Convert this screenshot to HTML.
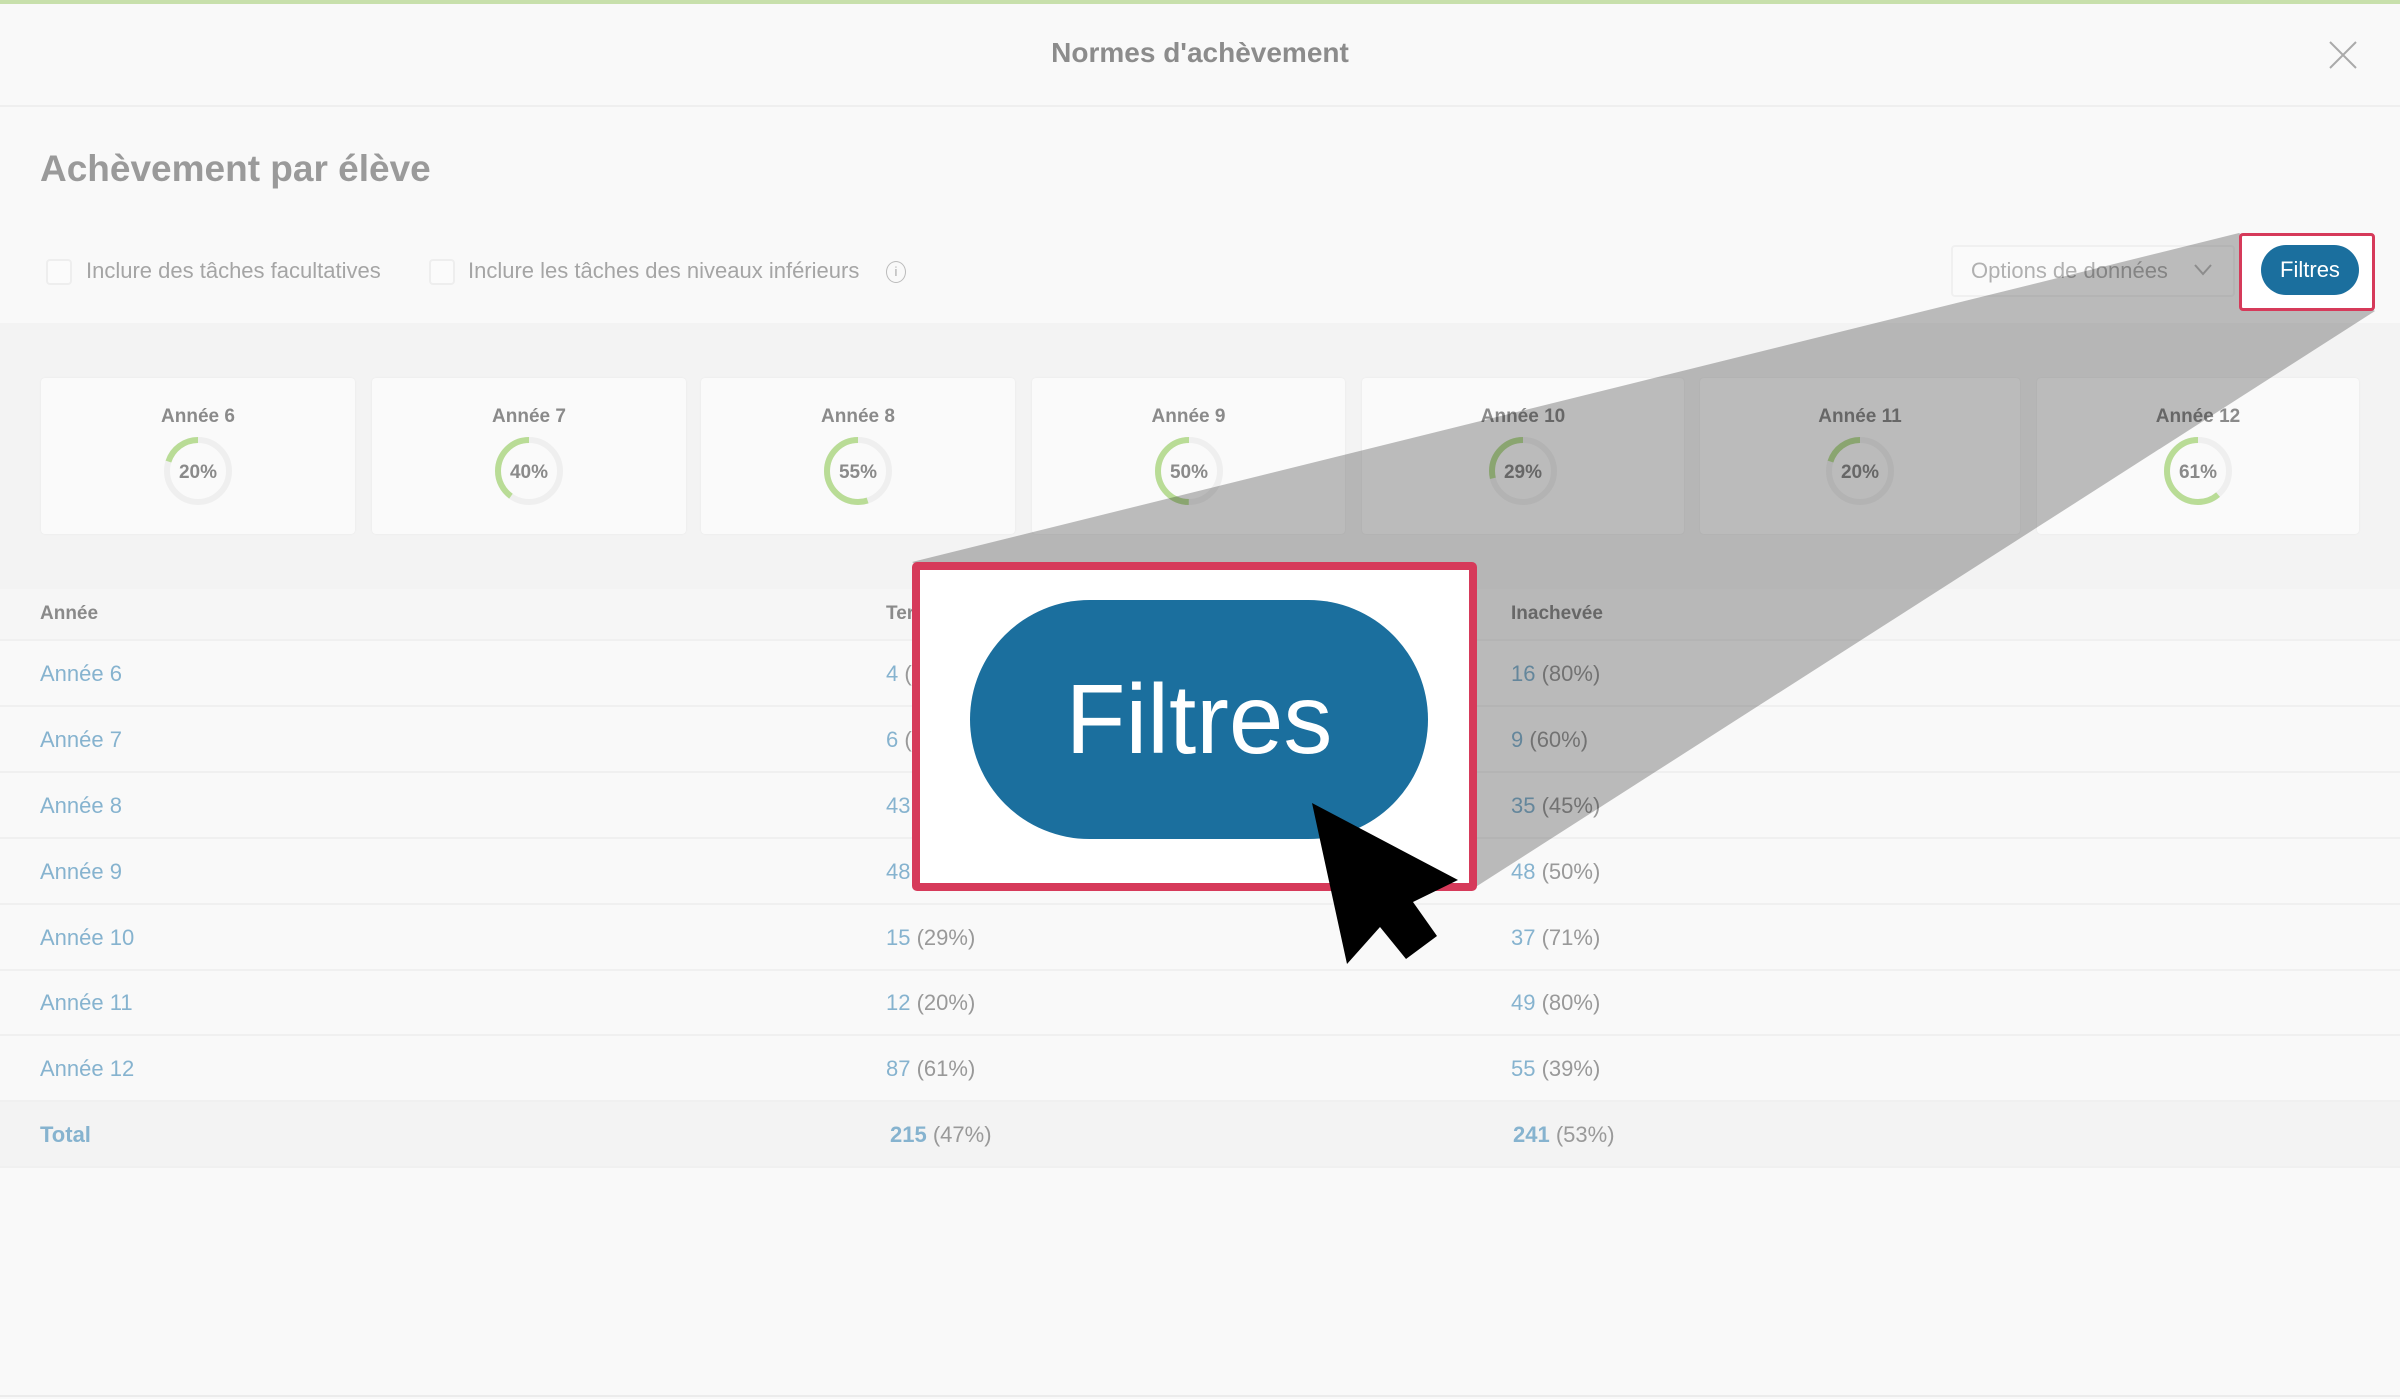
<!DOCTYPE html>
<html><head><meta charset="utf-8"><style>
*{margin:0;padding:0;box-sizing:border-box}
body{width:2400px;height:1399px;background:#f9f9f9;font-family:"Liberation Sans",sans-serif;position:relative;overflow:hidden}
.a{position:absolute;white-space:nowrap}
.card{position:absolute;top:378px;height:156px;background:#fafafa;border-radius:4px;box-shadow:0 0 2px rgba(0,0,0,.05)}
.card .l{position:absolute;top:28px;width:100%;text-align:center;font-size:19px;font-weight:bold;color:#8a8a8a}
.card svg{position:absolute;left:50%;top:55px;margin-left:-38px}
.row{position:absolute;left:0;width:2400px;height:66px;border-bottom:2px solid #f0f0f0}
.row span{position:absolute;top:20px;font-size:22px;color:#999}
.row span.lk,.row .lk{color:#86b3cf}
</style></head><body>
<div class="a" style="left:0;top:0;width:2400px;height:4px;background:#c8e0ac"></div>
<div class="a" style="left:0;top:105px;width:2400px;height:2px;background:#efefef"></div>
<div class="a" style="left:0;top:37px;width:2400px;text-align:center;font-size:28px;font-weight:bold;color:#8c8c8c">Normes d'achèvement</div>
<svg class="a" style="left:2329px;top:41px" width="28" height="28"><path d="M1 1L27 27M27 1L1 27" stroke="#aaa" stroke-width="2"/></svg>
<div class="a" style="left:40px;top:148px;font-size:37px;font-weight:bold;color:#9a9a9a">Achèvement par élève</div>
<div class="a" style="left:46px;top:259px;width:26px;height:26px;border:2px solid #eee;border-radius:4px;background:#fbfbfb"></div>
<div class="a" style="left:86px;top:258px;font-size:22px;color:#a5a5a5">Inclure des tâches facultatives</div>
<div class="a" style="left:429px;top:259px;width:26px;height:26px;border:2px solid #eee;border-radius:4px;background:#fbfbfb"></div>
<div class="a" style="left:468px;top:258px;font-size:22px;color:#a5a5a5">Inclure les tâches des niveaux inférieurs</div>
<div class="a" style="left:886px;top:261px;width:20px;height:22px;border:1.5px solid #bbb;border-radius:50%;font-size:13px;color:#aaa;text-align:center;line-height:19px">i</div>
<div class="a" style="left:1951px;top:245px;width:284px;height:52px;border:2px solid #f0f0f0;border-radius:4px;background:#fafafa"></div>
<div class="a" style="left:1971px;top:258px;font-size:22px;color:#b0b0b0">Options de données</div>
<svg class="a" style="left:2194px;top:264px" width="18" height="12"><path d="M1 1L9 10L17 1" stroke="#bbb" stroke-width="2" fill="none"/></svg>
<div class="a" style="left:0;top:323px;width:2400px;height:266px;background:#f3f3f3"></div>

<div class="card" style="left:41px;width:314px"><div class="l">Année 6</div><svg width="76" height="76"><circle cx="38" cy="38" r="31" stroke="#efefef" stroke-width="6" fill="none"/><circle cx="38" cy="38" r="31" stroke="#b9dc96" stroke-width="6" fill="none" stroke-dasharray="39 200" transform="translate(76 0) scale(-1 1) rotate(-90 38 38)"/><text x="38" y="45" text-anchor="middle" font-size="19" font-weight="bold" fill="#8a8a8a" font-family="Liberation Sans">20%</text></svg></div>
<div class="card" style="left:372px;width:314px"><div class="l">Année 7</div><svg width="76" height="76"><circle cx="38" cy="38" r="31" stroke="#efefef" stroke-width="6" fill="none"/><circle cx="38" cy="38" r="31" stroke="#b9dc96" stroke-width="6" fill="none" stroke-dasharray="78 200" transform="translate(76 0) scale(-1 1) rotate(-90 38 38)"/><text x="38" y="45" text-anchor="middle" font-size="19" font-weight="bold" fill="#8a8a8a" font-family="Liberation Sans">40%</text></svg></div>
<div class="card" style="left:701px;width:314px"><div class="l">Année 8</div><svg width="76" height="76"><circle cx="38" cy="38" r="31" stroke="#efefef" stroke-width="6" fill="none"/><circle cx="38" cy="38" r="31" stroke="#b9dc96" stroke-width="6" fill="none" stroke-dasharray="107 200" transform="translate(76 0) scale(-1 1) rotate(-90 38 38)"/><text x="38" y="45" text-anchor="middle" font-size="19" font-weight="bold" fill="#8a8a8a" font-family="Liberation Sans">55%</text></svg></div>
<div class="card" style="left:1032px;width:313px"><div class="l">Année 9</div><svg width="76" height="76"><circle cx="38" cy="38" r="31" stroke="#efefef" stroke-width="6" fill="none"/><circle cx="38" cy="38" r="31" stroke="#b9dc96" stroke-width="6" fill="none" stroke-dasharray="97 200" transform="translate(76 0) scale(-1 1) rotate(-90 38 38)"/><text x="38" y="45" text-anchor="middle" font-size="19" font-weight="bold" fill="#8a8a8a" font-family="Liberation Sans">50%</text></svg></div>
<div class="card" style="left:1362px;width:322px"><div class="l">Année 10</div><svg width="76" height="76"><circle cx="38" cy="38" r="31" stroke="#efefef" stroke-width="6" fill="none"/><circle cx="38" cy="38" r="31" stroke="#b9dc96" stroke-width="6" fill="none" stroke-dasharray="56 200" transform="translate(76 0) scale(-1 1) rotate(-90 38 38)"/><text x="38" y="45" text-anchor="middle" font-size="19" font-weight="bold" fill="#8a8a8a" font-family="Liberation Sans">29%</text></svg></div>
<div class="card" style="left:1700px;width:320px"><div class="l">Année 11</div><svg width="76" height="76"><circle cx="38" cy="38" r="31" stroke="#efefef" stroke-width="6" fill="none"/><circle cx="38" cy="38" r="31" stroke="#b9dc96" stroke-width="6" fill="none" stroke-dasharray="39 200" transform="translate(76 0) scale(-1 1) rotate(-90 38 38)"/><text x="38" y="45" text-anchor="middle" font-size="19" font-weight="bold" fill="#8a8a8a" font-family="Liberation Sans">20%</text></svg></div>
<div class="card" style="left:2037px;width:322px"><div class="l">Année 12</div><svg width="76" height="76"><circle cx="38" cy="38" r="31" stroke="#efefef" stroke-width="6" fill="none"/><circle cx="38" cy="38" r="31" stroke="#b9dc96" stroke-width="6" fill="none" stroke-dasharray="119 200" transform="translate(76 0) scale(-1 1) rotate(-90 38 38)"/><text x="38" y="45" text-anchor="middle" font-size="19" font-weight="bold" fill="#8a8a8a" font-family="Liberation Sans">61%</text></svg></div>

<div class="row" style="top:589px;height:52px;background:#f6f6f6"><span style="left:40px;top:14px;font-size:19px;font-weight:bold;color:#8a8a8a">Année</span><span style="left:886px;top:14px;font-size:19px;font-weight:bold;color:#8a8a8a">Terminée</span><span style="left:1511px;top:14px;font-size:19px;font-weight:bold;color:#8a8a8a">Inachevée</span></div>
<div class="row" style="top:641px"><span class="lk" style="left:40px">Année 6</span><span style="left:886px"><i class="lk" style="font-style:normal">4</i> (20%)</span><span style="left:1511px"><i class="lk" style="font-style:normal">16</i> (80%)</span></div>
<div class="row" style="top:707px"><span class="lk" style="left:40px">Année 7</span><span style="left:886px"><i class="lk" style="font-style:normal">6</i> (40%)</span><span style="left:1511px"><i class="lk" style="font-style:normal">9</i> (60%)</span></div>
<div class="row" style="top:773px"><span class="lk" style="left:40px">Année 8</span><span style="left:886px"><i class="lk" style="font-style:normal">43</i> (55%)</span><span style="left:1511px"><i class="lk" style="font-style:normal">35</i> (45%)</span></div>
<div class="row" style="top:839px"><span class="lk" style="left:40px">Année 9</span><span style="left:886px"><i class="lk" style="font-style:normal">48</i> (50%)</span><span style="left:1511px"><i class="lk" style="font-style:normal">48</i> (50%)</span></div>
<div class="row" style="top:905px"><span class="lk" style="left:40px">Année 10</span><span style="left:886px"><i class="lk" style="font-style:normal">15</i> (29%)</span><span style="left:1511px"><i class="lk" style="font-style:normal">37</i> (71%)</span></div>
<div class="row" style="top:970px"><span class="lk" style="left:40px">Année 11</span><span style="left:886px"><i class="lk" style="font-style:normal">12</i> (20%)</span><span style="left:1511px"><i class="lk" style="font-style:normal">49</i> (80%)</span></div>
<div class="row" style="top:1036px"><span class="lk" style="left:40px">Année 12</span><span style="left:886px"><i class="lk" style="font-style:normal">87</i> (61%)</span><span style="left:1511px"><i class="lk" style="font-style:normal">55</i> (39%)</span></div>
<div class="row" style="top:1102px;background:#f3f3f3"><span class="lk" style="left:40px;font-weight:bold">Total</span><span style="left:890px"><b class="lk">215</b> (47%)</span><span style="left:1513px"><b class="lk">241</b> (53%)</span></div>
<div class="a" style="left:0;top:1395px;width:2400px;height:2px;background:#ececec"></div>

<svg class="a" style="left:0;top:0" width="2400" height="1399"><polygon points="912,562 2239,233 2375,311 1474,888" fill="rgba(0,0,0,0.25)"/></svg>
<div class="a" style="left:2239px;top:233px;width:136px;height:78px;border:3px solid #d63a5a;border-radius:4px;background:#fff"></div>
<div class="a" style="left:2261px;top:245px;width:98px;height:50px;border-radius:25px;background:#1b6f9e;color:#fff;font-size:22px;text-align:center;line-height:50px">Filtres</div>
<div class="a" style="left:912px;top:562px;width:565px;height:329px;border:8px solid #d63a5a;border-radius:5px;background:#fff"></div>
<div class="a" style="left:970px;top:600px;width:458px;height:239px;border-radius:120px;background:#1b6f9e;color:#fff;font-size:98px;text-align:center;line-height:239px">Filtres</div>
<svg class="a" style="left:0;top:0" width="2400" height="1399"><polygon points="1312,803 1347,964 1380,927 1406,959 1437,936 1413,902 1458,880" fill="#000"/></svg>
</body></html>
